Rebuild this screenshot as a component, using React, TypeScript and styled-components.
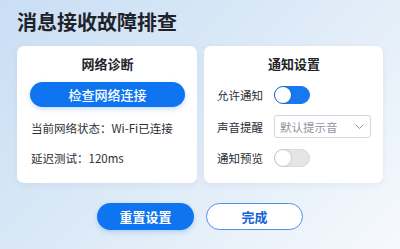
import React from 'react';
import styled, { createGlobalStyle } from 'styled-components';

const GlobalStyle = createGlobalStyle`
  html, body {
    margin: 0;
    padding: 0;
  }
  body {
    font-family: "Noto Sans CJK SC", "Noto Sans", sans-serif;
  }
`

const Page = styled.div`
  box-sizing: border-box;
  width: 400px;
  height: 249px;
  padding: 10px 17px 0;
  background: linear-gradient(135deg, #c9def4 0%, #dbe9f7 45%, #eaf2fa 75%, #f6f9fd 100%);
  overflow: hidden;
`

const Title = styled.h1`
  margin: 0;
  font-size: 20px;
  line-height: 24px;
  font-weight: 700;
  color: #1f2329;
`

const Cards = styled.div`
  display: grid;
  grid-template-columns: 180px 179px;
  gap: 7px;
  margin-top: 12px;
`

const Card = styled.div`
  box-sizing: border-box;
  height: 137px;
  background: #fff;
  border-radius: 7px;
  box-shadow: 0 2px 6px rgba(60, 100, 150, 0.08);
  padding: 10px 12px 0 13px;
  display: flex;
  flex-direction: column;
`

const CardTitle = styled.h2`
  margin: 0;
  font-size: 13px;
  line-height: 16px;
  font-weight: 700;
  color: #1f2329;
  text-align: center;
`

const PrimaryButton = styled.button<{ $w: number; $h: number }>`
  width: ${p => p.$w}px;
  height: ${p => p.$h}px;
  border: none;
  border-radius: ${p => p.$h / 2}px;
  background: #0f74ef;
  color: #fff;
  font-family: inherit;
  font-size: 13px;
  font-weight: 500;
  padding: 0;
  box-shadow: 0 2px 5px rgba(15, 116, 239, 0.25);
`

const CheckButton = styled(PrimaryButton)`
  margin-top: 10px;
  align-self: center;
`

const ResetButton = styled(PrimaryButton)`
  font-weight: 700;
`

const OutlineButton = styled.button`
  width: 97px;
  height: 27px;
  border: 1px solid #4f8fe8;
  border-radius: 14px;
  background: #fff;
  color: #1565d8;
  font-family: inherit;
  font-size: 13px;
  font-weight: 700;
  padding: 0;
`

const InfoLine = styled.p<{ $mt: number }>`
  margin: ${p => p.$mt}px 0 0 1px;
  font-size: 11.5px;
  line-height: 16px;
  color: #2b2f36;
`

const SettingRow = styled.div<{ $mt: number }>`
  display: flex;
  align-items: center;
  gap: 12px;
  margin-top: ${p => p.$mt}px;
`

const Label = styled.span`
  width: 45px;
  font-size: 11.5px;
  line-height: 16px;
  color: #2b2f36;
  white-space: nowrap;
`

const Toggle = styled.div<{ $on: boolean }>`
  position: relative;
  box-sizing: border-box;
  width: 36px;
  height: 18px;
  border-radius: 9px;
  background: ${p => (p.$on ? '#1878f0' : '#e4e5e7')};
  border: 1px solid ${p => (p.$on ? '#1878f0' : '#d8d9dc')};

  &::after {
    content: '';
    position: absolute;
    top: 0;
    left: 0;
    width: 16px;
    height: 16px;
    border-radius: 50%;
    background: #fff;
    box-shadow: 0 0 0 1px rgba(0, 0, 0, 0.12);
  }
`

const Select = styled.div`
  box-sizing: border-box;
  width: 98px;
  height: 23px;
  border: 1px solid #d3d7dd;
  border-radius: 3px;
  display: flex;
  align-items: center;
  justify-content: space-between;
  padding: 0 6px 0 5px;
  font-size: 11.5px;
  color: #8f959e;
`

const Actions = styled.div`
  display: flex;
  justify-content: center;
  gap: 12px;
  margin-top: 20px;
`

const Chevron = () => (
  <svg width="9" height="6" viewBox="0 0 9 6" fill="none">
    <path d="M1 1l3.5 3.5L8 1" stroke="#8f959e" strokeWidth="1" strokeLinecap="round" strokeLinejoin="round" />
  </svg>
)

const App: React.FC = () => {
  return (
    <Page>
      <GlobalStyle />
      <Title>消息接收故障排查</Title>
      <Cards>
        <Card>
          <CardTitle>网络诊断</CardTitle>
          <CheckButton $w={155} $h={25}>检查网络连接</CheckButton>
          <InfoLine $mt={13}>当前网络状态：Wi-Fi已连接</InfoLine>
          <InfoLine $mt={14}>延迟测试：120ms</InfoLine>
        </Card>
        <Card>
          <CardTitle>通知设置</CardTitle>
          <SettingRow $mt={14}>
            <Label>允许通知</Label>
            <Toggle $on />
          </SettingRow>
          <SettingRow $mt={11}>
            <Label>声音提醒</Label>
            <Select>
              默认提示音
              <Chevron />
            </Select>
          </SettingRow>
          <SettingRow $mt={11}>
            <Label>通知预览</Label>
            <Toggle $on={false} />
          </SettingRow>
        </Card>
      </Cards>
      <Actions>
        <ResetButton $w={97} $h={27}>重置设置</ResetButton>
        <OutlineButton>完成</OutlineButton>
      </Actions>
    </Page>
  );
}

export default App;
